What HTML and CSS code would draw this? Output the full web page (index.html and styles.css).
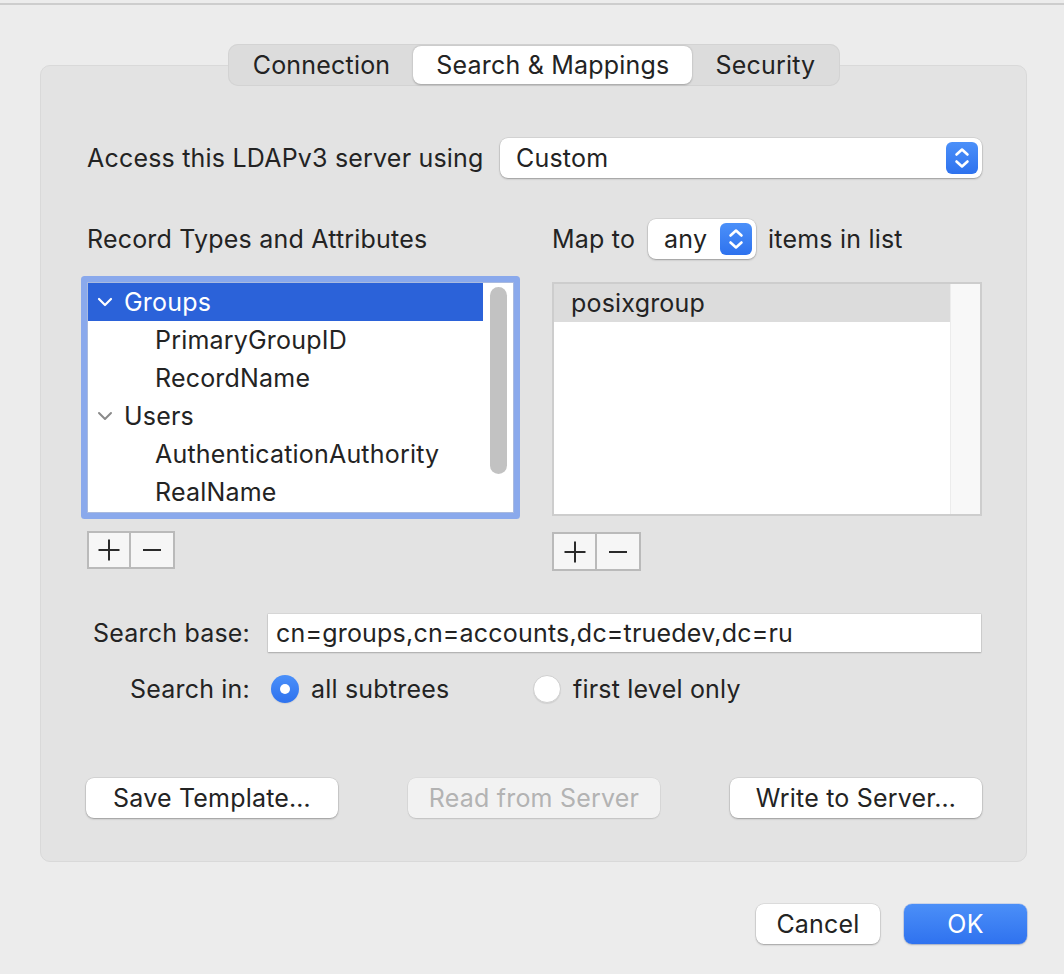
FILE: index.html
```html
<!DOCTYPE html>
<html>
<head>
<meta charset="utf-8">
<title>LDAP Search &amp; Mappings</title>
<link rel="stylesheet" href="styles.css">
</head>
<body>
<div class="topline"></div>
<div class="tabbar-wrap">
  <div class="tabbar">
    <div class="tab">Connection</div>
    <div class="tab active">Search &amp; Mappings</div>
    <div class="tab">Security</div>
  </div>
</div>
<div class="box">
  <div class="access">
    <span>Access this LDAPv3 server using</span>
    <div class="popup wide">
      <span>Custom</span>
      <span class="stepper"><svg width="32" height="32" viewBox="0 0 32 32"><polyline points="10.5,12.5 16,7.5 21.5,12.5" fill="none" stroke="#fff" stroke-width="2.6" stroke-linecap="round" stroke-linejoin="round"/><polyline points="10.5,19.5 16,24.5 21.5,19.5" fill="none" stroke="#fff" stroke-width="2.6" stroke-linecap="round" stroke-linejoin="round"/></svg></span>
    </div>
  </div>

  <div class="cols">
    <div class="col left">
      <div class="colhead">Record Types and Attributes</div>
      <div class="list focused">
        <div class="rows">
          <div class="item group sel"><svg class="chev" width="16" height="10" viewBox="0 0 16 10"><polyline points="2,2 8,8 14,2" fill="none" stroke="#fff" stroke-width="2.2" stroke-linecap="round" stroke-linejoin="round"/></svg>Groups</div>
          <div class="item child">PrimaryGroupID</div>
          <div class="item child">RecordName</div>
          <div class="item group"><svg class="chev" width="16" height="10" viewBox="0 0 16 10"><polyline points="2,2 8,8 14,2" fill="none" stroke="#8a8a8a" stroke-width="2" stroke-linecap="round" stroke-linejoin="round"/></svg>Users</div>
          <div class="item child">AuthenticationAuthority</div>
          <div class="item child">RealName</div>
        </div>
        <div class="gutter"><div class="thumb"></div></div>
      </div>
      <div class="pm">
        <div class="pmbtn"><svg width="24" height="24" viewBox="0 0 24 24"><path d="M12 1.5V22.5M1.5 12H22.5" stroke="#2a2a2a" stroke-width="2"/></svg></div>
        <div class="pmbtn"><svg width="24" height="24" viewBox="0 0 24 24"><path d="M3 12H21" stroke="#2a2a2a" stroke-width="2"/></svg></div>
      </div>
    </div>

    <div class="col right">
      <div class="colhead">
        <span>Map to</span>
        <div class="popup small">
          <span>any</span>
          <span class="stepper"><svg width="32" height="32" viewBox="0 0 32 32"><polyline points="10.5,12.5 16,7.5 21.5,12.5" fill="none" stroke="#fff" stroke-width="2.6" stroke-linecap="round" stroke-linejoin="round"/><polyline points="10.5,19.5 16,24.5 21.5,19.5" fill="none" stroke="#fff" stroke-width="2.6" stroke-linecap="round" stroke-linejoin="round"/></svg></span>
        </div>
        <span>items in list</span>
      </div>
      <div class="list plain">
        <div class="rows">
          <div class="item mapped">posixgroup</div>
        </div>
        <div class="gutter light"></div>
      </div>
      <div class="pm">
        <div class="pmbtn"><svg width="24" height="24" viewBox="0 0 24 24"><path d="M12 1.5V22.5M1.5 12H22.5" stroke="#2a2a2a" stroke-width="2"/></svg></div>
        <div class="pmbtn"><svg width="24" height="24" viewBox="0 0 24 24"><path d="M3 12H21" stroke="#2a2a2a" stroke-width="2"/></svg></div>
      </div>
    </div>
  </div>

  <div class="field-row">
    <span class="flabel">Search base:</span>
    <div class="field">cn=groups,cn=accounts,dc=truedev,dc=ru</div>
  </div>

  <div class="radio-row">
    <span class="flabel">Search in:</span>
    <div class="opt first"><span class="radio on"></span><span>all subtrees</span></div>
    <div class="opt"><span class="radio"></span><span>first level only</span></div>
  </div>

  <div class="actions">
    <button class="btn">Save Template…</button>
    <button class="btn disabled">Read from Server</button>
    <button class="btn">Write to Server…</button>
  </div>
</div>

<div class="footer">
  <button class="btn cancel">Cancel</button>
  <button class="btn ok">OK</button>
</div>
</body>
</html>
```

FILE: styles.css
```css
html, body {
  margin: 0;
  padding: 0;
}
body {
  width: 1064px;
  height: 974px;
  overflow: hidden;
  background: #ececec;
  font-family: Inter, "Liberation Sans", Arial, sans-serif;
  font-size: 25px;
  letter-spacing: 0.2px;
  color: #232323;
}

.topline {
  height: 2px;
  margin-top: 3px;
  background: #cdcdcd;
}

.tabbar-wrap {
  display: flex;
  justify-content: center;
  margin: 39px 0 -21px;
  padding-left: 4px;
  position: relative;
  z-index: 1;
}
.tabbar {
  display: flex;
  height: 42px;
  box-sizing: border-box;
  padding: 2px;
  background: #dcdcdc;
  border-radius: 10px;
  box-shadow: inset 0 0 0 1px #d3d3d3;
}
.tab {
  display: flex;
  align-items: center;
  padding: 0 23px;
  border-radius: 8px;
}
.tab.active {
  background: #fff;
  box-shadow: 0 0.5px 2px rgba(0,0,0,0.28);
}

.box {
  margin-left: 40px;
  width: 987px;
  box-sizing: border-box;
  border: 1px solid #d9d9d9;
  border-radius: 10px;
  background: #e3e3e3;
  padding: 72px 44px 43px 46px;
}

.access {
  display: flex;
  justify-content: space-between;
  align-items: center;
  height: 40px;
}

.popup {
  display: flex;
  align-items: center;
  justify-content: space-between;
  height: 40px;
  box-sizing: border-box;
  padding: 0 4px 0 16px;
  background: #fff;
  border-radius: 8px;
  box-shadow: 0 0 0 0.5px rgba(0,0,0,0.12), 0 1px 2px rgba(0,0,0,0.28);
}
.popup.wide { width: 482px; }
.popup.small { width: 108px; margin: 0 12px 0 13px; }
.stepper {
  display: flex;
  width: 32px;
  height: 32px;
  border-radius: 6px;
  background: linear-gradient(#4b90f9, #2e72ee);
}

.cols {
  display: flex;
  gap: 38px;
  margin-top: 41px;
}
.col {
  display: flex;
  flex-direction: column;
}
.col.left { width: 427px; }
.col.right { width: 430px; }
.colhead {
  display: flex;
  align-items: center;
  height: 40px;
}

.list {
  display: flex;
  margin-top: 23px;
  background: #fff;
  box-sizing: border-box;
}
.list.focused {
  height: 231px;
  border: 1px solid #a9badf;
  border-radius: 1px;
  box-shadow: 0 0 0 6px #8aa9ec;
}
.list.plain {
  height: 234px;
  border: 2px solid #cdcdcd;
}
.rows { flex: 1; }
.item {
  display: flex;
  align-items: center;
  height: 38px;
}
.item.group { padding-left: 9px; }
.item.group .chev { margin-right: 11px; }
.item.child { padding-left: 67px; }
.item.sel { background: #2b62d9; color: #fff; }
.item.mapped { background: #dcdcdc; padding-left: 17px; }

.gutter {
  width: 30px;
  box-sizing: border-box;
  padding: 4px 6px 0 7px;
}
.gutter.light {
  background: #f8f8f8;
  border-left: 1px solid #ececec;
}
.thumb {
  height: 187px;
  background: #c2c2c2;
  border-radius: 9px;
}

.pm {
  display: flex;
  margin-top: 18px;
}
.col.right .pm { margin-top: 16px; }
.pmbtn {
  display: flex;
  align-items: center;
  justify-content: center;
  width: 44px;
  height: 38px;
  box-sizing: border-box;
  background: #f6f6f6;
  border: 2px solid #bababa;
}
.pmbtn + .pmbtn { border-left: none; }
.col.right .pmbtn { height: 39px; }
.col.right .pmbtn:first-child { width: 45px; }

.field-row {
  display: flex;
  align-items: center;
  margin-top: 43px;
}
.flabel {
  width: 163px;
  text-align: right;
  flex: none;
}
.field {
  flex: 1;
  height: 38px;
  margin-left: 18px;
  margin-right: 1px;
  display: flex;
  align-items: center;
  padding-left: 8px;
  background: #fff;
  box-shadow: 0 0 0 0.5px rgba(0,0,0,0.1), 0 1px 1.5px rgba(0,0,0,0.22);
}

.radio-row {
  display: flex;
  align-items: center;
  height: 28px;
  margin-top: 23px;
}
.opt {
  display: flex;
  align-items: center;
  gap: 12px;
}
.opt.first {
  width: 262px;
  margin-left: 21px;
}
.radio {
  width: 28px;
  height: 28px;
  box-sizing: border-box;
  border-radius: 50%;
  background: #fff;
  border: 1px solid #cfcfcf;
  box-shadow: 0 1px 1px rgba(0,0,0,0.08);
  display: flex;
  align-items: center;
  justify-content: center;
}
.radio.on {
  border: none;
  background: linear-gradient(#4b90f9, #2e72ee);
}
.radio.on::after {
  content: "";
  width: 10px;
  height: 10px;
  border-radius: 50%;
  background: #fff;
}

.actions {
  display: flex;
  justify-content: space-between;
  margin-top: 75px;
  margin-left: -1px;
}
.btn {
  font: inherit;
  letter-spacing: inherit;
  color: #232323;
  width: 252px;
  height: 40px;
  padding: 0;
  border: none;
  border-radius: 8px;
  background: #fff;
  box-shadow: 0 0 0 0.5px rgba(0,0,0,0.12), 0 1px 2px rgba(0,0,0,0.28);
}
.btn.disabled {
  background: #f2f2f2;
  color: #b3b3b3;
  box-shadow: 0 0 0 0.5px rgba(0,0,0,0.06), 0 1px 1.5px rgba(0,0,0,0.12);
}

.footer {
  display: flex;
  justify-content: flex-end;
  gap: 24px;
  margin-top: 42px;
  padding-right: 37px;
}
.btn.cancel { width: 124px; }
.btn.ok {
  width: 123px;
  color: #fff;
  background: linear-gradient(#4b8ff8, #2f72ef);
  box-shadow: 0 0 0 0.5px rgba(30,90,220,0.3), 0 1px 2px rgba(0,0,0,0.2);
}
```
